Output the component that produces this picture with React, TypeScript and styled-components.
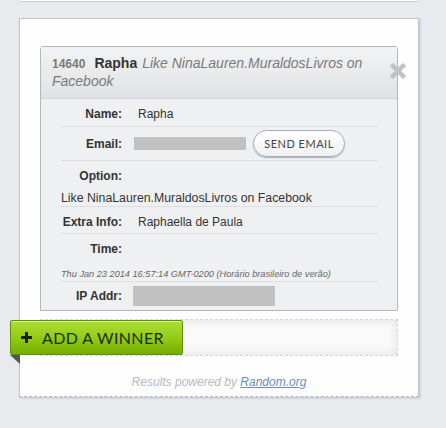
import styled, { createGlobalStyle } from "styled-components";

const GlobalStyle = createGlobalStyle`
  html, body {
    margin: 0;
    padding: 0;
    background: #e9eaee;
    font-family: "Liberation Sans", Arial, sans-serif;
  }
`;

const Page = styled.div`
  width: 446px;
  height: 428px;
  overflow: hidden;
  padding: 0 0 0 19px;
  box-sizing: border-box;
`;

const PrevCard = styled.div`
  width: 398px;
  height: 1px;
  margin-left: 1px;
  background: #fbfbfc;
  border-bottom: 1px solid #c9ccd3;
`;

const Card = styled.div`
  margin-top: 16px;
  width: 400px;
  box-sizing: border-box;
  background: #fdfdfd;
  border: 1px solid #c3c7d0;
  border-bottom: 1px dashed #b4bac6;
  box-shadow: 1px 1px 2px rgba(120, 130, 150, 0.45);
  padding: 27px 20px 0 20px;
`;

const Entry = styled.div`
  width: 358px;
  box-sizing: border-box;
  border: 1px solid #b3b7bf;
  border-radius: 3px 3px 0 0;
  background: #eff0f2;
`;

const EntryHeader = styled.div`
  position: relative;
  height: 52px;
  box-sizing: border-box;
  padding: 8px 28px 0 11px;
  background: linear-gradient(#f2f3f4, #e0e2e5);
  border-bottom: 1px solid #d4d6da;
  font-size: 14px;
  line-height: 17px;
  color: #777;
`;

const EntryId = styled.span`
  font-size: 12px;
  font-weight: bold;
  color: #7a7a7a;
  margin-right: 9px;
`;

const EntryName = styled.span`
  font-weight: bold;
  color: #333;
  margin-right: 5px;
`;

const EntryOption = styled.span`
  font-style: italic;
  color: #7b7b7b;
`;

const Close = styled.svg`
  position: absolute;
  right: -9px;
  top: 16px;
`;

const EntryBody = styled.div`
  padding: 0 20px;
`;

const Row = styled.div<{ $h: number; $stack?: boolean; $push?: number }>`
  display: grid;
  grid-template-columns: 61px 1fr;
  column-gap: 12px;
  align-items: ${({ $stack }) => ($stack ? "start" : "center")};
  height: ${({ $h }) => $h}px;
  box-sizing: border-box;
  border-bottom: 1px solid #dcdee2;
  padding-top: ${({ $stack, $push = 0 }) => ($stack ? 8 : $push)}px;
  &:last-child {
    border-bottom: none;
  }
`;

const Label = styled.div`
  text-align: right;
  font-size: 12px;
  font-weight: bold;
  color: #333;
`;

const Value = styled.div`
  font-size: 12px;
  color: #333;
  padding-left: 4px;
  display: flex;
  align-items: center;
`;

const Masked = styled.div<{ $w: number; $h: number; $bottom?: boolean }>`
  width: ${({ $w }) => $w}px;
  height: ${({ $h }) => $h}px;
  background: #c1c1c1;
  margin-left: ${({ $bottom }) => ($bottom ? -5 : -4)}px;
  align-self: ${({ $bottom }) => ($bottom ? "end" : "center")};
`;

const Wide = styled.div<{ $small?: boolean }>`
  grid-column: 1 / span 2;
  margin-top: ${({ $small }) => ($small ? "11px" : "7px")};
  font-size: ${({ $small }) => ($small ? "9.2px" : "12.3px")};
  font-style: ${({ $small }) => ($small ? "italic" : "normal")};
  color: ${({ $small }) => ($small ? "#666" : "#333")};
`;

const SendButton = styled.button`
  margin-left: 7px;
  width: 92px;
  height: 27px;
  border: 1px solid #a3abbb;
  border-radius: 14px;
  background: linear-gradient(#ffffff, #eef0f3);
  box-shadow: 0 1px 1px rgba(110, 120, 140, 0.5);
  font-family: Lato, "Open Sans", sans-serif;
  font-size: 11px;
  letter-spacing: 0.5px;
  color: #444;
  padding: 0;
`;

const DropRow = styled.div`
  position: relative;
  margin-top: 8px;
`;

const DropZone = styled.div`
  height: 37px;
  width: 358px;
  box-sizing: border-box;
  border: 1px dashed #d4d6da;
  box-shadow: inset 0 0 10px rgba(200, 202, 206, 0.5);
  background: #fafafa;
`;

const WinnerButton = styled.button`
  position: absolute;
  left: -30px;
  top: 1px;
  width: 173px;
  height: 35px;
  border: 1px solid #5f8f0c;
  border-radius: 2px;
  background: linear-gradient(#addf35, #8fca14 55%, #75ad02);
  box-shadow: inset 0 1px 0 rgba(230, 255, 170, 0.7);
  display: flex;
  align-items: center;
  gap: 10px;
  padding: 0 0 0 10px;
  font-family: Lato, "Open Sans", sans-serif;
  font-size: 16px;
  letter-spacing: 0.35px;
  color: #1e2b08;
  &::after {
    content: "";
    position: absolute;
    left: -1px;
    top: 34px;
    border-style: solid;
    border-width: 0 10px 9px 0;
    border-color: transparent #4e5c46 transparent transparent;
  }
`;

const Footer = styled.div`
  text-align: center;
  padding: 19px 0 7px;
  font-size: 12px;
  font-style: italic;
  color: #b9b9c2;
  a {
    color: #6a8db9;
    text-decoration: underline;
  }
`;

const App = () => {
  return (
    <>
      <GlobalStyle />
      <Page>
        <PrevCard />
        <Card>
          <Entry>
            <EntryHeader>
              <EntryId>14640</EntryId>
              <EntryName>Rapha</EntryName>
              <EntryOption>Like NinaLauren.MuraldosLivros on Facebook</EntryOption>
              <Close width="16" height="16" viewBox="0 0 16 16">
                <path d="M3 3 L13 13 M13 3 L3 13" stroke="#c2c2c2" strokeWidth="4.5" strokeLinecap="square" />
              </Close>
            </EntryHeader>
            <EntryBody>
              <Row $h={28} $push={2}>
                <Label>Name:</Label>
                <Value>Rapha</Value>
              </Row>
              <Row $h={34}>
                <Label>Email:</Label>
                <Value>
                  <Masked $w={112} $h={13} />
                  <SendButton>SEND EMAIL</SendButton>
                </Value>
              </Row>
              <Row $h={46} $stack>
                <Label>Option:</Label>
                <Wide>Like NinaLauren.MuraldosLivros on Facebook</Wide>
              </Row>
              <Row $h={27} $push={3}>
                <Label>Extra Info:</Label>
                <Value>Raphaella de Paula</Value>
              </Row>
              <Row $h={48} $stack>
                <Label>Time:</Label>
                <Wide $small>Thu Jan 23 2014 16:57:14 GMT-0200 (Horário brasileiro de verão)</Wide>
              </Row>
              <Row $h={28}>
                <Label>IP Addr:</Label>
                <Value>
                  <Masked $w={142} $h={20} $bottom />
                </Value>
              </Row>
            </EntryBody>
          </Entry>
          <DropRow>
            <DropZone />
            <WinnerButton>
              <svg width="11" height="11" viewBox="0 0 11 11">
                <path d="M5.5 0 V11 M0 5.5 H11" stroke="#1a2405" strokeWidth="3" />
              </svg>
              ADD A WINNER
            </WinnerButton>
          </DropRow>
          <Footer>
            Results powered by <a>Random.org</a>
          </Footer>
        </Card>
      </Page>
    </>
  );
};

export default App;
